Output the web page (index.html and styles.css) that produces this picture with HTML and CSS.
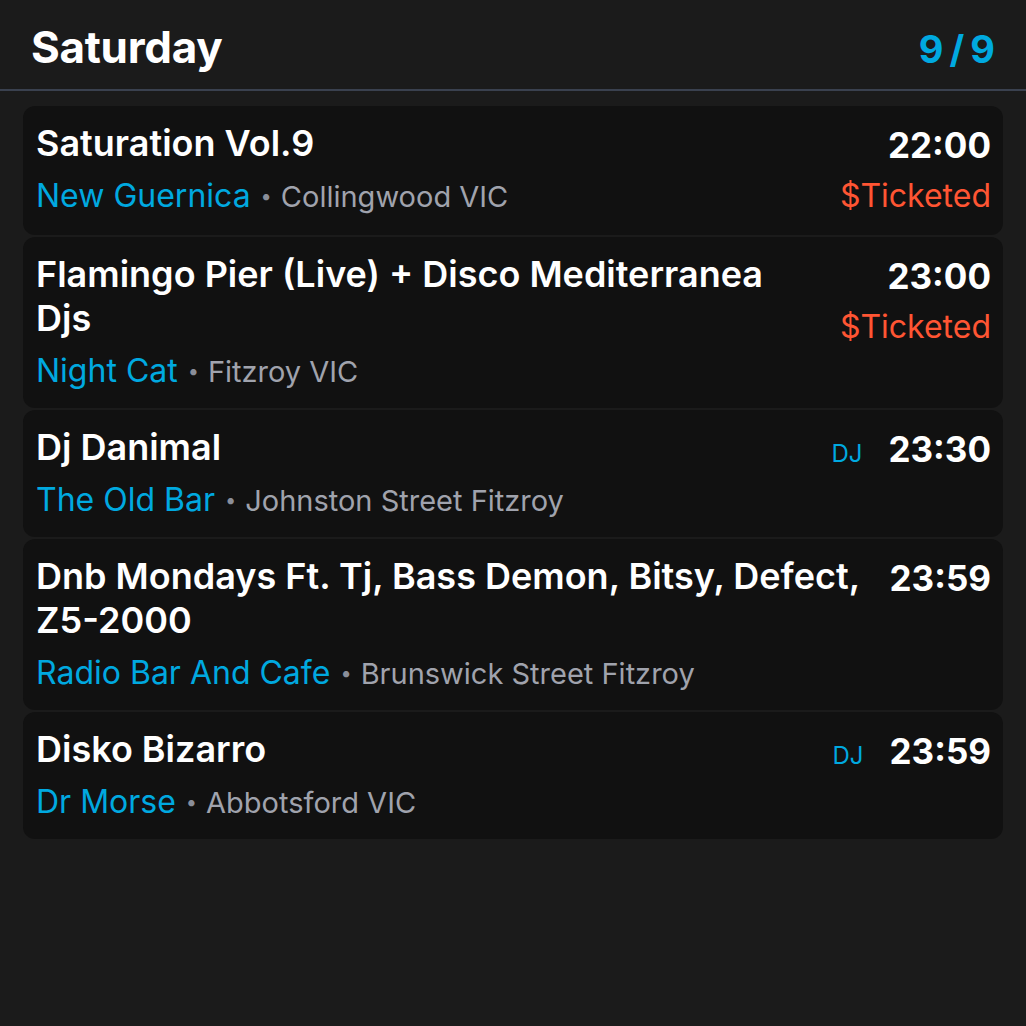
FILE: index.html
```html
<!DOCTYPE html>
<html>
<head>
<meta charset="utf-8">
<link rel="stylesheet" href="styles.css">
</head>
<body>
<div class="page">
  <header class="header">
    <h1 class="day">Saturday</h1>
    <div class="count">9<span class="slash">/</span>9</div>
  </header>
  <div class="list">
    <div class="card">
      <div class="info">
        <div class="title">Saturation Vol.9</div>
        <div class="meta"><span class="venue">New Guernica</span><span class="dot">•</span><span class="place">Collingwood VIC</span></div>
      </div>
      <div class="side">
        <div class="time-row"><span class="time">22:00</span></div>
        <div class="ticket">$Ticketed</div>
      </div>
    </div>
    <div class="card">
      <div class="info">
        <div class="title">Flamingo Pier (Live) + Disco Mediterranea Djs</div>
        <div class="meta"><span class="venue">Night Cat</span><span class="dot">•</span><span class="place">Fitzroy VIC</span></div>
      </div>
      <div class="side">
        <div class="time-row"><span class="time">23:00</span></div>
        <div class="ticket">$Ticketed</div>
      </div>
    </div>
    <div class="card">
      <div class="info">
        <div class="title">Dj Danimal</div>
        <div class="meta"><span class="venue">The Old Bar</span><span class="dot">•</span><span class="place">Johnston Street Fitzroy</span></div>
      </div>
      <div class="side">
        <div class="time-row"><span class="tag">DJ</span><span class="time">23:30</span></div>
      </div>
    </div>
    <div class="card">
      <div class="info">
        <div class="title">Dnb Mondays Ft. Tj, Bass Demon, Bitsy, Defect, <span class="nowrap">Z5-2000</span></div>
        <div class="meta"><span class="venue">Radio Bar And Cafe</span><span class="dot">•</span><span class="place">Brunswick Street Fitzroy</span></div>
      </div>
      <div class="side">
        <div class="time-row"><span class="time">23:59</span></div>
      </div>
    </div>
    <div class="card">
      <div class="info">
        <div class="title">Disko Bizarro</div>
        <div class="meta"><span class="venue">Dr Morse</span><span class="dot">•</span><span class="place">Abbotsford VIC</span></div>
      </div>
      <div class="side">
        <div class="time-row"><span class="tag">DJ</span><span class="time">23:59</span></div>
      </div>
    </div>
  </div>
</div>
</body>
</html>
```

FILE: styles.css
```css
html, body {
  margin: 0;
  padding: 0;
  background: #1b1b1b;
  font-family: Inter, "Noto Sans", "Liberation Sans", sans-serif;
  color: #ffffff;
}

.page {
  min-height: 1026px;
}

.header {
  display: flex;
  justify-content: space-between;
  align-items: baseline;
  padding: 19px 31px 0 31px;
  height: 70px;
  border-bottom: 2px solid #3a414f;
}

.day {
  margin: 0;
  font-size: 44px;
  font-weight: 700;
  line-height: 56px;
  letter-spacing: -0.3px;
}

.count {
  font-size: 38px;
  font-weight: 700;
  color: #00a9e0;
  line-height: 56px;
}

.slash {
  margin: 0 6px;
}

.list {
  display: flex;
  flex-direction: column;
  gap: 2px;
  padding: 15px 23px;
}

.card {
  display: flex;
  justify-content: space-between;
  gap: 30px;
  background: #111111;
  border-radius: 12px;
  padding: 15px 12px 13px 13px;
}

.info {
  flex: 1;
  min-width: 0;
}

.title {
  font-size: 36px;
  font-weight: 600;
  line-height: 44px;
}

.nowrap {
  white-space: nowrap;
}

.meta {
  font-size: 32px;
  line-height: 48px;
  margin-top: 7px;
}

.venue {
  color: #00a9e0;
}

.dot {
  color: #8a8e99;
  font-size: 20px;
  line-height: 1;
  margin: 0 9px 0 10px;
  vertical-align: 4px;
}

.place {
  color: #a0a3ad;
  font-size: 29px;
  line-height: 1;
}

.side {
  display: flex;
  flex-direction: column;
  align-items: flex-end;
  flex-shrink: 0;
}

.time-row {
  display: flex;
  align-items: baseline;
  gap: 26px;
}

.time {
  font-size: 35px;
  font-weight: 700;
  line-height: 48px;
}

.tag {
  font-size: 24px;
  color: #00a9e0;
}

.ticket {
  font-size: 32px;
  color: #ff5533;
  line-height: 53px;
}
```
